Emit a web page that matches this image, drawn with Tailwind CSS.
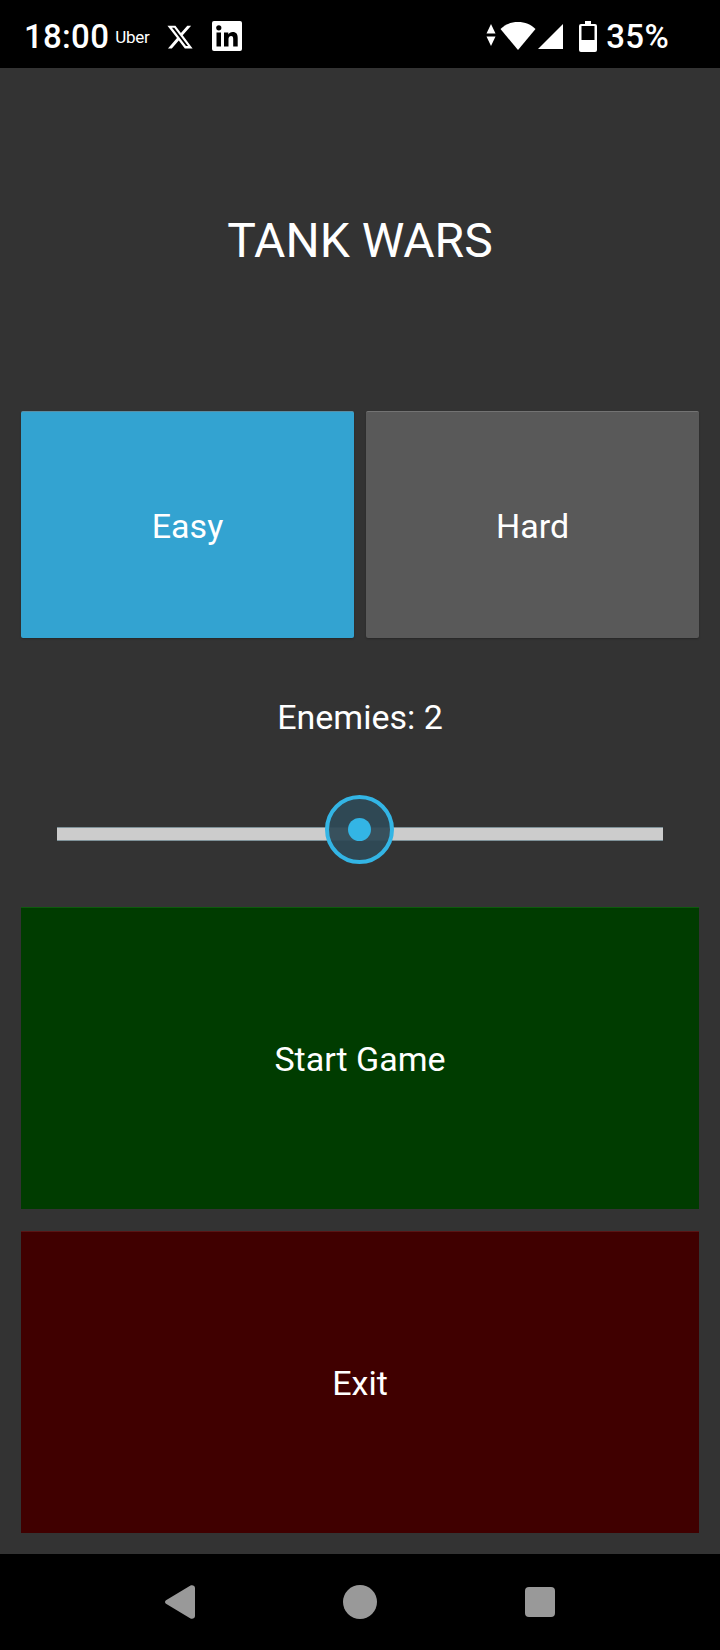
<!DOCTYPE html>
<html lang="en">
<head>
    <meta charset="UTF-8">
    <meta name="viewport" content="width=device-width, initial-scale=1.0">
    <title>Tank Wars</title>
    <script src="https://cdn.jsdelivr.net/npm/@tailwindcss/browser@4"></script>
</head>
<body class="bg-[#333333] font-[Roboto,sans-serif] text-white">
<div class="w-[720px] h-[1650px] flex flex-col overflow-hidden">
    <!-- Status bar -->
    <div class="h-[68px] shrink-0 bg-black flex items-center justify-between pl-[24px] pr-[51px] pt-[4px]">
        <div class="flex items-center">
            <span class="text-[33px] leading-none font-medium tracking-[0.3px]">18:00</span>
            <span class="ml-[6px] text-[17px] leading-none mt-[3px] tracking-[-0.3px]">Uber</span>
            <svg class="ml-[17px] mt-[2px]" width="28" height="28" viewBox="0 0 24 24" fill="#fff"><path d="M18.24 2.25h3.31l-7.23 8.26 8.5 11.24h-6.66l-5.21-6.82-5.97 6.82H1.68l7.73-8.84L1.25 2.25h6.83l4.71 6.23zm-1.16 17.52h1.83L7.08 4.13H5.12z"/></svg>
            <svg class="ml-[18px]" width="30" height="30" viewBox="0 0 30 30"><rect width="30" height="30" rx="2" fill="#fff"/><rect x="4.500" y="11.500" width="4.500" height="14" fill="#000"/><circle cx="6.800" cy="6.800" r="2.600" fill="#000"/><path d="M12 11.500h4.300v2c.8-1.400 2.300-2.400 4.400-2.400 3.700 0 5 2.300 5 6v8.400h-4.500v-7.500c0-1.900-.5-3.100-2.100-3.100-1.800 0-2.600 1.300-2.600 3.200v7.400H12z" fill="#000"/></svg>
        </div>
        <div class="flex items-center">
            <svg class="-mt-[3px]" width="10" height="24" viewBox="0 0 10 24" fill="#fff"><path d="M5 1l4.500 9.500h-9zM5 23L.5 13.500h9z"/></svg>
            <svg class="ml-[4px]" width="36" height="30" viewBox="0 0 36 30" fill="#fff"><path d="M18 29L.5 8C5 3.500 11 1 18 1s13 2.500 17.500 7z"/></svg>
            <svg class="ml-[2px]" width="25" height="25" viewBox="0 0 25 25" fill="#fff"><path d="M25 0v25H0z"/></svg>
            <svg class="ml-[16px]" width="18" height="31" viewBox="0 0 18 31"><path d="M6 0h6v3h4a2 2 0 0 1 2 2v24a2 2 0 0 1-2 2H2a2 2 0 0 1-2-2V5a2 2 0 0 1 2-2h4z" fill="#fff"/><rect x="2.500" y="5" width="13" height="14" fill="#000"/></svg>
            <span class="ml-[9px] text-[33px] leading-none font-medium tracking-[0.3px]">35%</span>
        </div>
    </div>

    <!-- Main content -->
    <main class="flex-1 flex flex-col px-[21px]">
        <h1 class="h-[343px] pt-[2px] flex items-center justify-center text-[48px] leading-none font-normal">TANK WARS</h1>

        <div class="flex gap-[12px]">
            <button class="flex-1 h-[227px] pt-[3px] rounded-[2px] bg-[#33a3d1] border-t border-[#5a8ea5] text-[34px] shadow-[0_1px_2px_rgba(0,0,0,0.25)]">Easy</button>
            <button class="flex-1 h-[227px] pt-[3px] rounded-[2px] bg-[#595959] border-t border-[#737373] text-[34px] shadow-[0_1px_2px_rgba(0,0,0,0.25)]">Hard</button>
        </div>

        <p class="mt-[43px] h-[72px] text-center text-[34px] leading-[72px]">Enemies: 2</p>

        <!-- Slider -->
        <div class="relative h-[70px] mt-[42px] mx-[36px] flex items-center">
            <div class="w-full h-[14px] mt-[7px] bg-[#cccccc] border-y border-[#7f9299]"></div>
            <div class="absolute left-[268px] top-0 w-[69px] h-[69px] rounded-full border-[4px] border-[#33b5e5] bg-[#2f4a56]/95 flex items-center justify-center">
                <div class="w-[23px] h-[23px] rounded-full bg-[#33b5e5]"></div>
            </div>
        </div>

        <button class="mt-[42px] h-[302px] pt-[2px] bg-[#003c00] border-t border-[#0c5a0c] text-[34px]">Start Game</button>
        <button class="mt-[22px] h-[302px] pt-[2px] bg-[#400000] border-t border-[#5a1414] text-[34px]">Exit</button>
    </main>

    <!-- Navigation bar -->
    <div class="h-[96px] shrink-0 bg-black flex items-center justify-center gap-[148px]">
        <svg width="30" height="34" viewBox="0 0 30 34" fill="#999"><path d="M1 15.300 25.500.6c1.800-1 4.500 0 4.500 2.400v28c0 2.400-2.700 3.400-4.500 2.400L1 18.700c-1.300-.8-1.300-2.600 0-3.400z"/></svg>
        <div class="w-[34px] h-[34px] rounded-full bg-[#999999]"></div>
        <div class="w-[30px] h-[30px] rounded-[4px] bg-[#999999]"></div>
    </div>
</div>
</body>
</html>
